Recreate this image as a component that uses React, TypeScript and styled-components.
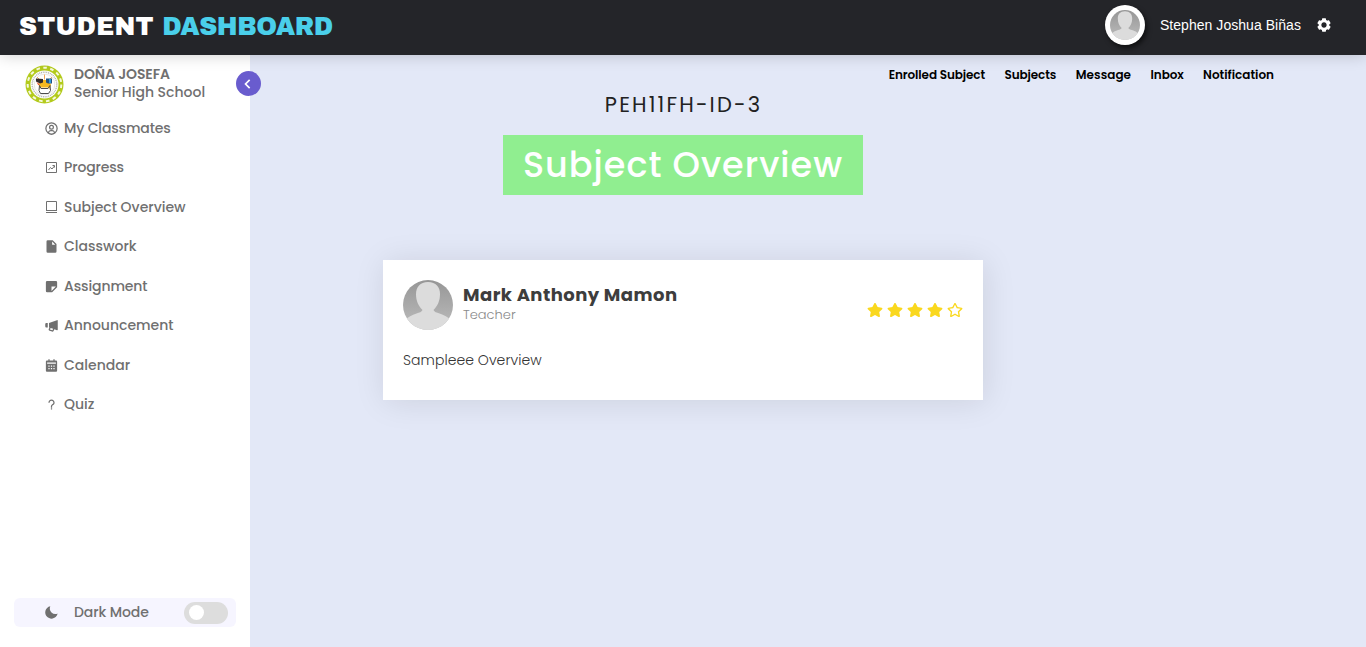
import React from 'react';
import styled, { createGlobalStyle } from 'styled-components';
import {
  BiUserCircle,
  BiSolidFileBlank,
  BiSolidNote,
  BiSolidMegaphone,
  BiSolidCalendar,
  BiQuestionMark,
  BiSolidMoon,
  BiSolidCog,
  BiChevronLeft,
} from 'react-icons/bi';
import { FaStar, FaRegStar } from 'react-icons/fa';

const GlobalStyle = createGlobalStyle`
  * { box-sizing: border-box; margin: 0; padding: 0; }
  body { background: #e3e8f7; font-family: Poppins, Inter, sans-serif; overflow: hidden; }
  ul { list-style: none; }
`;

const Page = styled.div`
  display: flex;
  flex-direction: column;
  height: 647px;
`;

const TopBar = styled.header`
  position: relative;
  z-index: 2;
  flex: none;
  display: flex;
  align-items: center;
  justify-content: space-between;
  height: 55px;
  padding: 0 34px 5px 19px;
  background: #242529;
  box-shadow: 0 0 15px rgba(0, 0, 0, 0.2);
`;

const Brand = styled.h1`
  padding-top: 4px;
  font: 400 25px/30px 'Archivo Black', 'Arial Black', Inter, sans-serif;
  letter-spacing: 0.2px;
  color: #fff;
  white-space: nowrap;
  span { color: #4acfea; letter-spacing: -0.45px; }
`;

const Account = styled.div`
  display: flex;
  align-items: center;
  color: #fff;
  svg { display: block; }
`;

const UserName = styled.span`
  margin: 0 15px;
  font: 14px/20px 'Liberation Sans', sans-serif;
  letter-spacing: 0.05px;
  white-space: nowrap;
`;

const AvatarRing = styled.div`
  width: 40px;
  height: 40px;
  padding: 5px;
  border-radius: 50%;
  background: #fff;
  box-shadow: 2px 3px 5px rgba(0, 0, 0, 0.6);
`;

const Body = styled.div`
  flex: 1;
  display: flex;
`;

const Sidebar = styled.aside`
  position: relative;
  display: flex;
  flex-direction: column;
  width: 250px;
  padding: 10px 14px 20px;
  background: #fff;
  color: #707070;
`;

const School = styled.div`
  display: flex;
  align-items: center;
  gap: 10.5px;
  height: 38px;
  padding-left: 10.5px;
`;

const SchoolText = styled.div`
  padding-bottom: 2px;
`;

const SchoolName = styled.div<{ $bold?: boolean }>`
  font-size: 14px;
  line-height: 18px;
  font-weight: ${(p) => (p.$bold ? 600 : 500)};
  letter-spacing: ${(p) => (p.$bold ? -0.1 : 0)}px;
  white-space: nowrap;
`;

const Collapse = styled.button`
  position: absolute;
  top: 16px;
  right: -11px;
  display: flex;
  align-items: center;
  justify-content: center;
  width: 25px;
  height: 25px;
  border: 0;
  border-radius: 50%;
  background: #695cce;
  color: #fff;
  svg { flex: none; margin-right: 2px; }
`;

const Menu = styled.ul`
  padding: 5.6px 0 0 30px;
`;

const MenuItem = styled.li<{ $track?: number }>`
  display: flex;
  align-items: center;
  gap: 5px;
  height: 39.5px;
  font-size: 14px;
  font-weight: 500;
  letter-spacing: ${(p) => p.$track ?? 0}px;
  svg { flex: none; width: 15px; height: 15px; }
`;

const ModeRow = styled.div`
  display: flex;
  align-items: center;
  gap: 15px;
  height: 29px;
  margin-top: auto;
  padding: 0 8px 0 30px;
  border-radius: 6px;
  background: #f6f5ff;
  font-size: 14px;
  font-weight: 500;
  letter-spacing: -0.1px;
`;

const Toggle = styled.div`
  width: 44px;
  height: 22px;
  margin-left: auto;
  padding: 3px 5px;
  border-radius: 11px;
  background: #ddd;
  &::before {
    content: '';
    display: block;
    width: 15px;
    height: 15px;
    border-radius: 50%;
    background: #fff;
  }
`;

const Main = styled.main`
  flex: 1;
  display: flex;
  flex-direction: column;
`;

const Links = styled.nav`
  display: flex;
  align-self: flex-end;
  gap: 19.5px;
  height: 40px;
  padding-right: 92px;
`;

const NavLink = styled.a<{ $track: number }>`
  font-size: 12px;
  font-weight: 600;
  line-height: 40px;
  letter-spacing: ${(p) => p.$track}px;
  color: #000;
  white-space: nowrap;
`;

const Overview = styled.section`
  display: flex;
  flex-direction: column;
  align-items: center;
  width: 600px;
  margin-left: 133px;
`;

const Code = styled.h2`
  height: 40px;
  padding-left: 1px;
  font-size: 21px;
  font-weight: 400;
  line-height: 20px;
  letter-spacing: 2.15px;
  color: #222;
`;

const Banner = styled.div`
  display: flex;
  justify-content: center;
  width: 360px;
  height: 60px;
  background: #90ee90;
  color: #fff;
  font-size: 35px;
  font-weight: 500;
  line-height: 60px;
  letter-spacing: 1px;
  white-space: nowrap;
`;

const Card = styled.article`
  width: 600px;
  height: 140px;
  margin-top: 65px;
  padding: 20px;
  background: #fff;
  box-shadow: 2px 2px 30px rgba(0, 0, 0, 0.1);
`;

const CardHead = styled.div`
  display: flex;
  height: 50px;
`;

const Teacher = styled.div`
  display: flex;
  flex-direction: column;
  margin-left: 10px;
  padding-top: 4px;
`;

const TeacherName = styled.strong`
  font-size: 18px;
  font-weight: 700;
  line-height: 22px;
  letter-spacing: 0.45px;
  color: #3d3d3d;
`;

const Role = styled.span`
  font-size: 13px;
  font-weight: 300;
  line-height: 17px;
  color: #8a8a8a;
`;

const Stars = styled.div`
  display: flex;
  gap: 4px;
  margin: 22px 0 0 auto;
  color: #fad81e;
  svg { width: 16px; height: 16px; }
`;

const Note = styled.p`
  margin-top: 20px;
  font-size: 14px;
  font-weight: 300;
  line-height: 20px;
  letter-spacing: 0.05px;
  color: #333;
`;

const Portrait = ({ size }: { size: number }) => (
  <svg width={size} height={size} viewBox="0 0 50 50">
    <defs>
      <linearGradient id={`shade${size}`} x1="0" y1="0" x2="0" y2="1">
        <stop offset="0" stopColor="#969696" />
        <stop offset="1" stopColor="#bdbdbd" />
      </linearGradient>
      <clipPath id={`round${size}`}>
        <circle cx="25" cy="25" r="25" />
      </clipPath>
    </defs>
    <g clipPath={`url(#round${size})`}>
      <rect width="50" height="50" fill={`url(#shade${size})`} />
      <path
        d="M25 2C17 2 13 7 13 14c0 7 2.500 12 6.500 16-1 2-3 2.500-6 3.500C9 35 5 37 2 40v10h46V40c-3-3-7-5-11.500-6.500-3-1-5-1.500-6-3.500C34.500 26 37 21 37 14 37 7 33 2 25 2z"
        fill="#dcdcdc"
      />
    </g>
  </svg>
);

const Crest = () => (
  <svg width="39" height="39" viewBox="0 0 39 39">
    <circle cx="19.500" cy="19.500" r="19" fill="#b3ca1c" />
    <circle cx="19.500" cy="19.500" r="16.800" fill="none" stroke="#f6f9dc" strokeWidth="2" strokeDasharray="3.600 3.440" />
    <circle cx="19.500" cy="19.500" r="14" fill="#fff" />
    <circle cx="19.500" cy="19.500" r="12.300" fill="none" stroke="#b5b6b1" strokeWidth="1.500" strokeDasharray="1 .8" />
    <circle cx="19.500" cy="19.500" r="10.300" fill="#fff" stroke="#ccc" strokeWidth=".5" />
    <path d="M19.500 9.500v5M12 12l4 4M27 12l-4 4" stroke="#f2a65a" strokeWidth="1" />
    <path d="M15 15h9l2 5-2 5h-9l-1-5z" fill="#f5b91f" />
    <path d="M11 13.500l7 .5v3.500l-3 1-4-2z" fill="#332b2a" />
    <path d="M21 13.500h6v5h-4l-2-1z" fill="#23527e" />
    <path d="M24 14h2v4h-2z" fill="#2d9be0" />
    <path d="M11.500 17l3 2-1 1.500z" fill="#e44c2b" />
    <path d="M15.500 22.500h8l1 4-2.500 1h-5l-2.500-1z" fill="#fff" />
    <path d="M14.500 20.500l1.500 3h7l2-3 .5 5-2 3h-8l-1.500-3z" fill="none" stroke="#4d4d4d" strokeWidth="1" />
  </svg>
);

const ProgressIcon = () => (
  <svg viewBox="0 0 15 15" fill="none" stroke="currentColor">
    <path d="M2.500 2.500h10v10h-10z" />
    <path d="M4.500 10l2-2.500 1.500 1.500 2.500-3M8.500 5.500h2v2" />
  </svg>
);

const BookIcon = () => (
  <svg viewBox="0 0 15 15" fill="none" stroke="currentColor">
    <path d="M2.500 11v-9.500h10v9.500M2 10.500h11M2 12.500h11" />
  </svg>
);

const menu = [
  { icon: <BiUserCircle />, label: 'My Classmates', track: -0.15 },
  { icon: <ProgressIcon />, label: 'Progress', track: -0.15 },
  { icon: <BookIcon />, label: 'Subject Overview' },
  { icon: <BiSolidFileBlank />, label: 'Classwork' },
  { icon: <BiSolidNote />, label: 'Assignment', track: -0.1 },
  { icon: <BiSolidMegaphone />, label: 'Announcement' },
  { icon: <BiSolidCalendar />, label: 'Calendar' },
  { icon: <BiQuestionMark />, label: 'Quiz' },
];

const links = [
  { label: 'Enrolled Subject', track: -0.1 },
  { label: 'Subjects', track: -0.1 },
  { label: 'Message', track: 0.05 },
  { label: 'Inbox', track: -0.1 },
  { label: 'Notification', track: 0 },
];

export default function App() {
  return (
    <Page>
      <GlobalStyle />
      <TopBar>
        <Brand>STUDENT <span>DASHBOARD</span></Brand>
        <Account>
          <AvatarRing><Portrait size={30} /></AvatarRing>
          <UserName>Stephen Joshua Biñas</UserName>
          <BiSolidCog size={16} />
        </Account>
      </TopBar>
      <Body>
        <Sidebar>
          <School>
            <Crest />
            <SchoolText>
              <SchoolName $bold>DOÑA JOSEFA</SchoolName>
              <SchoolName>Senior High School</SchoolName>
            </SchoolText>
          </School>
          <Collapse><BiChevronLeft size={20} /></Collapse>
          <Menu>
            {menu.map((m) => (
              <MenuItem key={m.label} $track={m.track}>{m.icon}<span>{m.label}</span></MenuItem>
            ))}
          </Menu>
          <ModeRow>
            <BiSolidMoon size={15} />
            <span>Dark Mode</span>
            <Toggle />
          </ModeRow>
        </Sidebar>
        <Main>
          <Links>
            {links.map((l) => <NavLink key={l.label} $track={l.track}>{l.label}</NavLink>)}
          </Links>
          <Overview>
            <Code>PEH11FH-ID-3</Code>
            <Banner>Subject Overview</Banner>
            <Card>
              <CardHead>
                <Portrait size={50} />
                <Teacher>
                  <TeacherName>Mark Anthony Mamon</TeacherName>
                  <Role>Teacher</Role>
                </Teacher>
                <Stars><FaStar /><FaStar /><FaStar /><FaStar /><FaRegStar /></Stars>
              </CardHead>
              <Note>Sampleee Overview</Note>
            </Card>
          </Overview>
        </Main>
      </Body>
    </Page>
  );
}
